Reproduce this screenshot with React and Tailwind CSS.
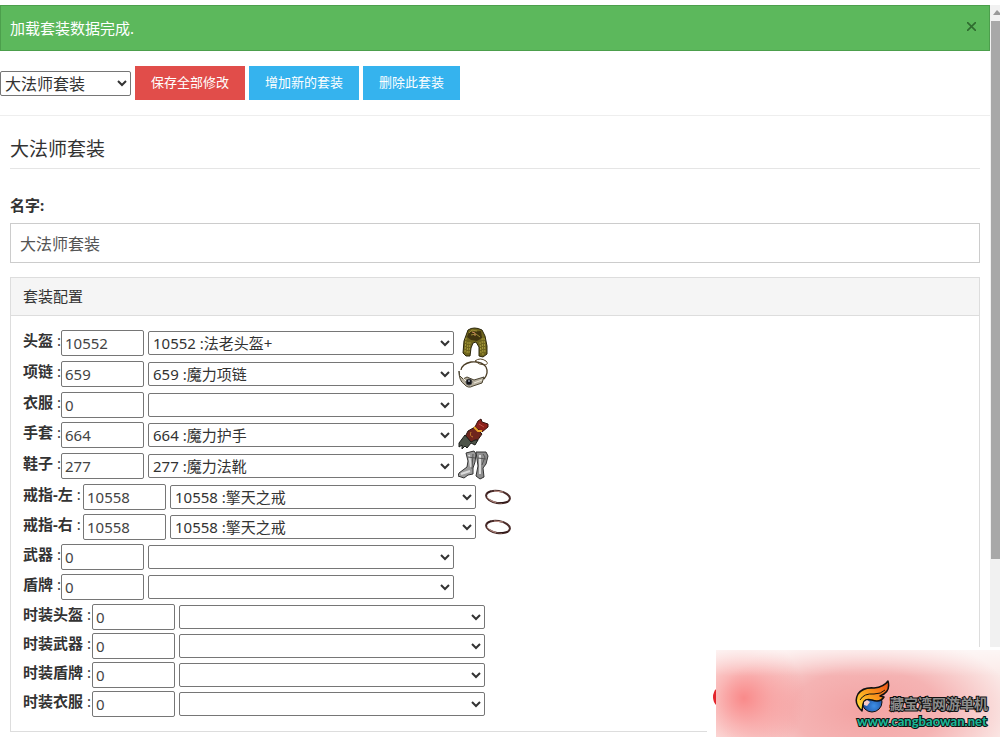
import React, { useState } from 'react';

const SLOTS = [
  { id: 'helmet', label: '头盔', value: '10552', item: '10552 :法老头盔+', icon: 'helmet' },
  { id: 'necklace', label: '项链', value: '659', item: '659 :魔力项链', icon: 'necklace' },
  { id: 'clothes', label: '衣服', value: '0', item: '' },
  { id: 'gloves', label: '手套', value: '664', item: '664 :魔力护手', icon: 'glove' },
  { id: 'boots', label: '鞋子', value: '277', item: '277 :魔力法靴', icon: 'boots' },
  { id: 'ring-left', label: '戒指-左', value: '10558', item: '10558 :擎天之戒', icon: 'ring' },
  { id: 'ring-right', label: '戒指-右', value: '10558', item: '10558 :擎天之戒', icon: 'ring' },
  { id: 'weapon', label: '武器', value: '0', item: '' },
  { id: 'shield', label: '盾牌', value: '0', item: '' },
  { id: 'fashion-helmet', label: '时装头盔', value: '0', item: '' },
  { id: 'fashion-weapon', label: '时装武器', value: '0', item: '' },
  { id: 'fashion-shield', label: '时装盾牌', value: '0', item: '' },
  { id: 'fashion-clothes', label: '时装衣服', value: '0', item: '' },
];

const rowHeight = (slot) => {
  if (slot.id.startsWith('fashion')) return 'h-[29px]';
  if (slot.icon && slot.icon !== 'ring') return 'h-[31px]';
  return 'h-[30px]';
};

const labelWidth = (slot) => {
  if (slot.id.startsWith('fashion')) return 'w-[69px]';
  if (slot.icon === 'ring') return 'w-[60px]';
  return 'w-[38px]';
};

function ItemIcon({ name }) {
  if (name === 'helmet') {
    return (
      <svg className="w-8 h-8 -mt-1 shrink-0" viewBox="0 0 32 32">
        <path d="M10 4 Q16 0 24 4 L27 10 L29 20 L29 28 L25 31 L21 30 L21 21 L18 16 L15 17 L13 22 L12 30 L8 30 L5 27 L6 15 Z" fill="#6f651d" stroke="#2b260a" />
        <path d="M8 12 L7 26 M10 16 L9 28 M12 16 L11 27 M22 16 L23 28 M24 12 L25 29 M26 12 L27 27" stroke="#a79c3c" strokeDasharray="2 1" />
        <path d="M11 6 L23 5 L24 12 L19 15 L13 14 L9 11 Z" fill="#40340f" />
        <path d="M11 7 L14 4 L19 5 M13 9 L18 8 L22 11" stroke="#9c8a35" fill="none" />
        <path d="M14 6 L17 7 L17 10" stroke="#c98a5c" fill="none" />
      </svg>
    );
  }
  if (name === 'necklace') {
    return (
      <svg className="w-8 h-8 -mt-1 shrink-0" viewBox="0 0 32 32" fill="none">
        <path d="M17 4 Q22 0 28 4 Q31 7 27 8 Q21 8 17 4" stroke="#5b4a2b" />
        <path d="M3 13 Q4 7 13 5 Q24 4 28 10 Q31 16 26 22" stroke="#4a3c24" strokeWidth="1.3" />
        <path d="M1 14 Q0 19 5 22 L9 20 L16 23 L26 20 L24 26 L15 29 Q10 32 6 27 Q1 24 1 14 Z" fill="#b8b1a0" stroke="#4b4432" />
        <path d="M4 20 L8 24 M16 26 L24 23" stroke="#f0ebdd" />
        <circle cx="11" cy="25" r="3" fill="#15171c" stroke="#4a4a4a" />
        <circle cx="11" cy="24" r="1" fill="#98a0ae" />
      </svg>
    );
  }
  if (name === 'glove') {
    return (
      <svg className="w-8 h-8 -mt-1 shrink-0" viewBox="0 0 32 32">
        <path d="M10 13 L17 9 L24 16 L19 23 L11 25 L5 23 Z" fill="#6f261d" stroke="#291511" />
        <path d="M20 3 L23 1 L24 4 L30 6 L30 9 L24 14 L17 9 Z" fill="#8d211c" stroke="#35110d" />
        <path d="M21 6 L26 9" stroke="#bd5145" />
        <path d="M16 9 L20 13 L24 13" stroke="#eba52d" strokeWidth="2" fill="none" />
        <path d="M13 14 Q11 18 15 19" stroke="#c47b2a" fill="none" />
        <path d="M7 17 L1 25 L1 29 L4 27 L4 31 L7 28 L9 30 L13 25 L17 27 L20 22 L17 22 L13 24 Z" fill="#4d5449" stroke="#181b18" />
      </svg>
    );
  }
  if (name === 'boots') {
    return (
      <svg className="w-8 h-8 -mt-1 shrink-0" viewBox="0 0 32 32">
        <path d="M8 4 L16 2 L18 5 L17 13 L15 19 L15 25 L10 26 L6 29 L0 27 L1 24 L9 18 L10 12 Z" fill="#9b9b9b" stroke="#333" />
        <path d="M18 3 L28 3 L30 7 L28 15 L25 19 L26 28 L22 30 L18 27 L20 17 Z" fill="#8d8d8d" stroke="#333" />
        <path d="M11 6 L13 18 M22 6 L22 25 M3 25 L12 22" stroke="#dcdcdc" strokeWidth="2" />
        <path d="M15 5 L14 20 M25 5 L27 8 L24 16 M10 8 L17 9 M20 9 L28 10" stroke="#555" fill="none" />
      </svg>
    );
  }
  return (
    <svg className="w-8 h-8 -mt-1 ml-1 shrink-0" viewBox="0 0 32 32" fill="none">
      <ellipse cx="14" cy="17" rx="12" ry="6" transform="rotate(9 14 17)" stroke="#4a2c2a" strokeWidth="2" />
      <path d="M3 17 Q7 23 18 23 M10 11 L19 12" stroke="#c3968b" />
      <path d="M12 23 L24 22 M3 13 L7 11" stroke="#2a1414" />
    </svg>
  );
}

function SlotRow({ slot }) {
  const [value, setValue] = useState(slot.value);

  return (
    <div className={`flex items-start ${rowHeight(slot)}`}>
      <label htmlFor={slot.id} className={`${labelWidth(slot)} shrink-0 whitespace-nowrap text-[15px] leading-[21px] font-bold`}>
        {slot.label} <span className="font-normal">:</span>
      </label>
      <input
        id={slot.id}
        value={value}
        onChange={(e) => setValue(e.target.value)}
        className="w-[83px] h-[26px] shrink-0 border border-[#767676] rounded-xs bg-white px-[3px] text-[15px] text-[#444]"
      />
      <select
        aria-label={slot.label}
        defaultValue={slot.item}
        className="w-[306px] h-6 mt-px ml-1 mr-1 border border-[#767676] rounded-xs bg-white text-[15px] text-[#333]"
      >
        <option>{slot.item}</option>
      </select>
      {slot.icon && <ItemIcon name={slot.icon} />}
    </div>
  );
}

function Watermark() {
  return (
    <div className="fixed right-0 bottom-0 w-[293px] h-[90px] bg-white pl-[9px] pt-[3px] overflow-hidden">
      <div className="absolute left-[6px] top-[38px] w-6 h-6 rounded-full bg-[#e3242b]" />
      <div className="relative h-full bg-[#fbeae8]">
        <div className="absolute inset-0 bg-[radial-gradient(circle_at_28px_48px,#f98a8a_0,#f98f8f88_28px,transparent_62px),radial-gradient(ellipse_150px_80px_at_150px_60px,#f3a3a3_0,#f5b3b3_50%,transparent_100%)]" />
        <div className="absolute inset-0 bg-linear-to-b from-white/60 to-transparent to-30%" />
        <div className="relative flex pt-[29px] pl-[139px]">
          <svg className="w-[35px] h-[35px] shrink-0" viewBox="0 0 35 35">
            <defs>
              <linearGradient id="wing" x1="0" y1="1" x2="1" y2="0">
                <stop offset="0" stopColor="#ffe93a" />
                <stop offset="0.5" stopColor="#fb9a1c" />
                <stop offset="1" stopColor="#ee4a1a" />
              </linearGradient>
              <radialGradient id="globe" cx="0.6" cy="0.7" r="0.7">
                <stop offset="0" stopColor="#3d8fe6" />
                <stop offset="1" stopColor="#123a86" />
              </radialGradient>
            </defs>
            <circle cx="17" cy="23" r="10" fill="url(#globe)" stroke="#111" />
            <path d="M7 32 Q-2 24 3 15 Q8 8 19 9 Q29 8 33 2 Q36 13 25 17 L29 18 Q25 24 17 21 Q9 19 8 25 Z" fill="url(#wing)" stroke="#111" strokeWidth="1.5" strokeLinejoin="round" />
            <path d="M5 21 Q9 14 19 15 Q26 15 30 11" stroke="#111" fill="none" />
            <path d="M9 23 L12 21 L15 23 L12 27 L9 26 Z" fill="#f6c9c8" />
          </svg>
          <span className="pt-[15px] text-sm leading-5 font-bold whitespace-nowrap text-[#8c8c8c] [-webkit-text-stroke:2px_#111] [paint-order:stroke]">藏宝湾网游单机</span>
        </div>
        <div className="absolute left-[141px] top-[61px] font-['Lato'] text-[13px] leading-5 font-black whitespace-nowrap text-[#1bb596] [-webkit-text-stroke:2px_#111] [paint-order:stroke]">www.cangbaowan.net</div>
      </div>
    </div>
  );
}

export default function App() {
  const [name, setName] = useState('大法师套装');
  const [showAlert, setShowAlert] = useState(true);

  return (
    <div className="flex min-h-screen bg-white pt-[5px] font-['Noto_Sans','Noto_Sans_CJK_SC',sans-serif] text-[#333]">
      <main className="flex-1 min-w-0">
        {showAlert && (
          <div className="flex items-center justify-between h-[46px] px-[9px] border border-[#4c9f4c] bg-[#5cb85c] text-[15px] text-white">
            <span>加载套装数据完成.</span>
            <button onClick={() => setShowAlert(false)} aria-label="关闭" className="px-1 pb-1 text-[#2f6b2f]">
              <svg className="w-[9px] h-[9px]" viewBox="0 0 9 9" stroke="currentColor" strokeWidth="1.6">
                <path d="M0 0 L9 9 M9 0 L0 9" />
              </svg>
            </button>
          </div>
        )}

        {/* Toolbar */}
        <div className="flex items-center gap-1 pt-[15px] pb-[15px] border-b border-[#eee]">
          <select aria-label="套装" className="w-[131px] h-[25px] border border-[#767676] rounded-xs bg-white text-base">
            <option>大法师套装</option>
          </select>
          <button className="h-[34px] px-4 bg-[#e14d4a] text-[13px] text-white">保存全部修改</button>
          <button className="h-[34px] px-4 bg-[#35b3ee] text-[13px] text-white">增加新的套装</button>
          <button className="h-[34px] px-4 bg-[#35b3ee] text-[13px] text-white">删除此套装</button>
        </div>

        <div className="px-[10px]">
          <h2 className="pt-[17px] pb-[3px] mb-6 border-b border-[#e5e5e5] text-[19px] leading-8">{name}</h2>
          <label htmlFor="suit-name" className="block mb-[6px] text-[15px] leading-6 font-bold">名字:</label>
          <input
            id="suit-name"
            value={name}
            onChange={(e) => setName(e.target.value)}
            className="block w-full h-10 px-[9px] mb-[14px] border border-[#ccc] text-base text-[#555]"
          />

          {/* Equipment slots */}
          <section className="border border-[#ddd]">
            <h3 className="h-[38px] px-3 border-b border-[#ddd] bg-[#f5f5f5] text-[15px] leading-9">套装配置</h3>
            <div className="px-3 pt-[14px] pb-[11px]">
              {SLOTS.map((slot) => (
                <SlotRow key={slot.id} slot={slot} />
              ))}
            </div>
          </section>
        </div>
      </main>

      {/* Scroll track */}
      <div className="w-[10px] shrink-0 bg-[#f1f1f1]">
        <div className="h-4 pt-[5px]">
          <svg className="w-full h-[5px]" viewBox="0 0 10 5" fill="#999">
            <path d="M3 5 L7 0 L10 3 L10 5 Z" />
          </svg>
        </div>
        <div className="ml-px h-[538px] bg-[#a8a8a8]" />
      </div>

      <Watermark />
    </div>
  );
}
